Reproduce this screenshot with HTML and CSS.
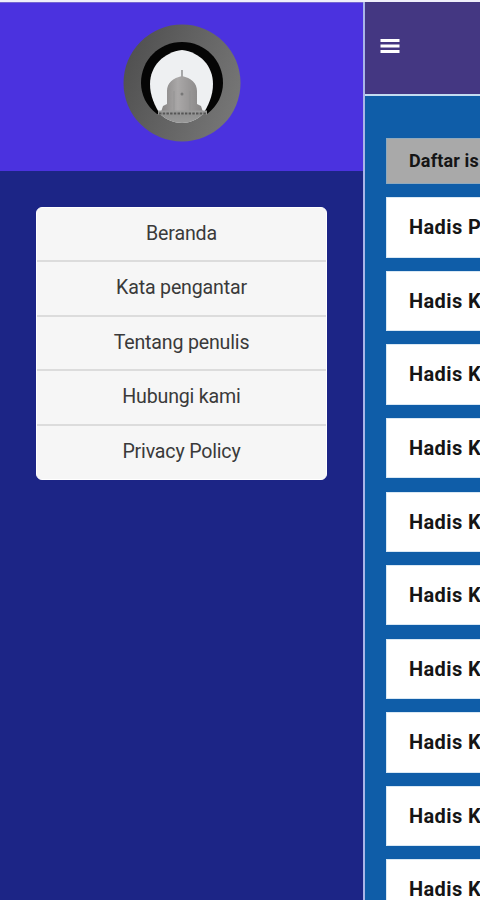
FILE: index.html
```html
<!DOCTYPE html>
<html lang="id">
<head>
    <meta charset="UTF-8">
    <meta name="viewport" content="width=device-width, initial-scale=1.0">
    <title>Daftar isi</title>

    <link rel="stylesheet" href="styles.css">
</head>
<body>

    <aside class="sidebar">
        <div class="sidebar-header">
            <svg class="logo" viewBox="0 0 118 118">
                <defs>
                    <linearGradient id="ring" x1="0" y1="0.3" x2="1" y2="0.7">
                        <stop offset="0" stop-color="#505050"/>
                        <stop offset="1" stop-color="#777"/>
                    </linearGradient>
                    <linearGradient id="base" x1="0" y1="0" x2="0" y2="1">
                        <stop offset="0" stop-color="#8d8d8d"/>
                        <stop offset="1" stop-color="#a0a0a0"/>
                    </linearGradient>
                    <linearGradient id="dome" x1="0" y1="0" x2="1" y2="0">
                        <stop offset="0" stop-color="#858383"/>
                        <stop offset="0.4" stop-color="#aaa8a8"/>
                        <stop offset="1" stop-color="#858383"/>
                    </linearGradient>
                    <clipPath id="window">
                        <path d="M59 26C77 28 90 42 90 60C90 72 85 82 80 90C74 96 66 99 59 99S43 96 37 90C32 82 27 72 27 60C27 42 41 28 59 26Z"/>
                    </clipPath>
                </defs>
                <circle cx="59" cy="59" r="58.500" fill="url(#ring)"/>
                <path d="M34 90C23 82 18 70 18 59C18 36 36 18 59 18S100 36 100 59C100 70 95 82 84 90Z" fill="#050505"/>
                <g clip-path="url(#window)">
                    <rect x="24" y="24" width="70" height="78" fill="#eef0f2"/>
                    <!-- dome -->
                    <path d="M59 46V54" stroke="#777" stroke-width="1.200"/>
                    <path d="M38 88L40 82L44 80V67C44 59 50 54 59 52C68 54 74 59 74 67V80L78 82L80 88Z" fill="url(#dome)"/>
                    <path d="M51 88V67M67 88V67" stroke="#918f8f" stroke-width="0.700"/>
                    <circle cx="59" cy="70" r="1.500" fill="#777"/>
                    <rect x="24" y="87" width="70" height="20" fill="url(#base)"/>
                </g>
                <path d="M35 88.500H84" stroke="#999" stroke-width="4"/>
                <path d="M36 89.500H84" stroke="#555" stroke-width="2" stroke-dasharray="2.500 1.200"/>
            </svg>
        </div>

        <nav class="menu">
            <a class="menu-item">Beranda</a>
            <a class="menu-item">Kata pengantar</a>
            <a class="menu-item">Tentang penulis</a>
            <a class="menu-item">Hubungi kami</a>
            <a class="menu-item">Privacy Policy</a>
        </nav>
    </aside>

    <main class="content">
        <header class="topbar">
            <svg class="menu-icon" viewBox="0 0 20 16">
                <path d="M0.500 2.500H19.500M0.500 8H19.500M0.500 13.500H19.500" stroke="#fff" stroke-width="2.800"/>
            </svg>
        </header>

        <div class="list">
            <div class="list-title">Daftar is</div>
            <div class="card">Hadis P</div>
            <div class="card">Hadis K</div>
            <div class="card">Hadis K</div>
            <div class="card">Hadis K</div>
            <div class="card">Hadis K</div>
            <div class="card">Hadis K</div>
            <div class="card">Hadis K</div>
            <div class="card">Hadis K</div>
            <div class="card">Hadis K</div>
            <div class="card">Hadis K</div>
        </div>
    </main>

</body>
</html>
```
FILE: styles.css
```css
*{
    box-sizing: border-box;
}

body{
    margin: 0;
    display: flex;
    height: 900px;
    overflow: hidden;
    font-family: Roboto, sans-serif;
    background-color: #1c2586;
    border-top: 2px solid #f0effa;
}

.sidebar{
    flex: none;
    width: 363px;
    background-color: #1c2586;
}

.sidebar-header{
    display: flex;
    justify-content: center;
    height: 169px;
    padding-top: 21px;
    background-color: #4b32df;
    border-top: 1px solid #7565d2;
}

.logo{
    width: 118px;
    height: 118px;
}

.menu{
    width: 291px;
    margin: 36px 0 0 36px;
    background-color: #f6f6f6;
    border: 1px solid #fff;
    border-radius: 6px;
    overflow: hidden;
}

.menu-item{
    display: block;
    height: 54.4px;
    padding-top: 1px;
    line-height: 50px;
    font-size: 19.6px;
    letter-spacing: -0.18px;
    color: #3a3a3a;
    text-align: center;
    border-bottom: 2px solid #dcdcdc;
}

.menu-item:last-child{
    height: 53px;
    border-bottom: none;
}

.content{
    flex: 1;
    min-width: 0;
    background-color: #0f5da8;
    border-left: 2px solid #a9b5e8;
}

.topbar{
    display: flex;
    align-items: center;
    height: 94px;
    padding: 0 0 5px 15px;
    background-color: #443782;
    border-bottom: 2px solid #c3dcf0;
}

.menu-icon{
    width: 20px;
    height: 16px;
}

.list{
    display: flex;
    flex-direction: column;
    gap: 13.2px;
    height: 804px;
    padding: 42px 0 0 21px;
    overflow: hidden;
    white-space: nowrap;
}

.list-title{
    flex: none;
    height: 46px;
    padding-left: 22px;
    line-height: 44px;
    font-size: 18px;
    font-weight: 700;
    letter-spacing: 0.15px;
    color: #151515;
    background-color: #a9a9a9;
    border: 1px solid #8fa9bd;
    border-right: none;
}

.card{
    flex: none;
    height: 60.4px;
    padding-left: 22px;
    line-height: 59px;
    font-size: 20px;
    font-weight: 700;
    letter-spacing: 0.4px;
    color: #151515;
    background-color: #fff;
    border: 1px solid #d9e8f4;
    border-right: none;
}
```
